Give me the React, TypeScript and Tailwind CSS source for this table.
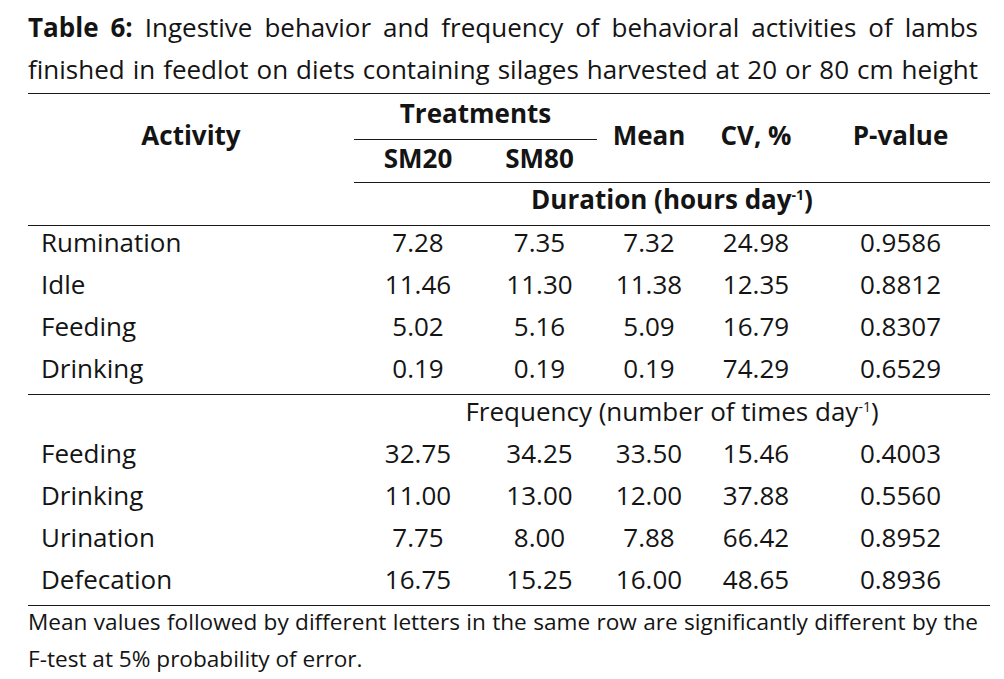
const durationRows = [
  { label: "Rumination", v: ["7.28", "7.35", "7.32", "24.98", "0.9586"] },
  { label: "Idle", v: ["11.46", "11.30", "11.38", "12.35", "0.8812"] },
  { label: "Feeding", v: ["5.02", "5.16", "5.09", "16.79", "0.8307"] },
  { label: "Drinking", v: ["0.19", "0.19", "0.19", "74.29", "0.6529"] },
];

const frequencyRows = [
  { label: "Feeding", v: ["32.75", "34.25", "33.50", "15.46", "0.4003"] },
  { label: "Drinking", v: ["11.00", "13.00", "12.00", "37.88", "0.5560"] },
  { label: "Urination", v: ["7.75", "8.00", "7.88", "66.42", "0.8952"] },
  { label: "Defecation", v: ["16.75", "15.25", "16.00", "48.65", "0.8936"] },
];

function DataRow({ label, v }: { label: string; v: string[] }) {
  return (
    <tr className="h-[42px]">
      <td className="pl-[13px] pb-[10px] text-left align-middle leading-[32px]">{label}</td>
      {v.map((x, i) => (
        <td key={i} className="pb-[10px] text-center align-middle leading-[32px]">
          {x}
        </td>
      ))}
    </tr>
  );
}

function Sup() {
  return <sup className="relative -top-[9px] text-[14px]">-1</sup>;
}

export default function App() {
  return (
    <div className="min-h-screen w-[1004px] bg-white pl-[28px] pt-[6px] text-[#141414] font-['Open_Sans',sans-serif]">
      {/* caption */}
      <div className="w-[950px] text-[26px] leading-[42px]">
        <div className="text-justify [text-align-last:justify]">
          <b className="font-bold">Table 6:</b> Ingestive behavior and frequency of behavioral activities of lambs
        </div>
        <div className="text-justify [text-align-last:justify]">
          finished in feedlot on diets containing silages harvested at 20 or 80 cm height
        </div>
      </div>

      <table className="mt-[3px] w-[962px] table-fixed border-collapse text-[26px] leading-[36px]">
        <colgroup>
          <col className="w-[326px]" />
          <col className="w-[128px]" />
          <col className="w-[115px]" />
          <col className="w-[104px]" />
          <col className="w-[110px]" />
          <col className="w-[179px]" />
        </colgroup>
        <thead>
          <tr className="h-[46px] border-t border-[#1a1a1a]">
            <th rowSpan={2} className="pb-[6px] text-center align-middle font-bold">
              Activity
            </th>
            <th colSpan={2} className="border-b border-[#1a1a1a] pb-[8px] text-center align-middle font-bold">
              Treatments
            </th>
            <th rowSpan={2} className="border-b border-[#1a1a1a] pb-[6px] text-center align-middle font-bold">
              Mean
            </th>
            <th rowSpan={2} className="border-b border-[#1a1a1a] pb-[6px] text-center align-middle font-bold">
              CV, %
            </th>
            <th rowSpan={2} className="border-b border-[#1a1a1a] pb-[6px] text-center align-middle font-bold">
              P-value
            </th>
          </tr>
          <tr className="h-[43px]">
            <th className="border-b border-[#1a1a1a] pb-[6px] text-center align-middle font-bold">SM20</th>
            <th className="border-b border-[#1a1a1a] pb-[6px] text-center align-middle font-bold">SM80</th>
          </tr>
        </thead>
        <tbody>
          <tr className="h-[42px] border-b border-[#1a1a1a]">
            <td />
            <td colSpan={5} className="pb-[10px] text-center align-middle font-bold leading-[32px]">
              Duration (hours day<Sup />)
            </td>
          </tr>
          {durationRows.map((r) => (
            <DataRow key={r.label} {...r} />
          ))}
          <tr className="h-[42px] border-t border-[#1a1a1a]">
            <td />
            <td colSpan={5} className="pb-[10px] text-center align-middle leading-[32px]">
              Frequency (number of times day<Sup />)
            </td>
          </tr>
          {frequencyRows.map((r) => (
            <DataRow key={r.label + "f"} {...r} />
          ))}
          <tr className="border-t border-[#1a1a1a]">
            <td colSpan={6} />
          </tr>
        </tbody>
      </table>

      {/* footnote */}
      <div className="-mt-[3px] w-[950px] text-[22.6px] leading-[37px]">
        <div className="text-justify [text-align-last:justify]">
          Mean values followed by different letters in the same row are significantly different by the
        </div>
        <div>F-test at 5% probability of error.</div>
      </div>
    </div>
  );
}
